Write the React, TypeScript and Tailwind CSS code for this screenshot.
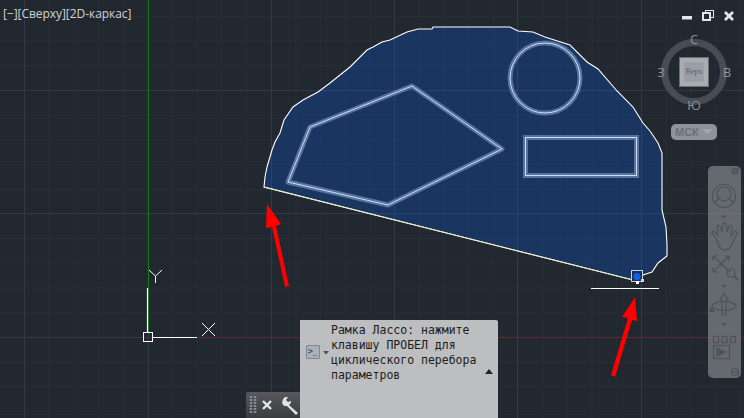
import React from "react";

const minorX = Array.from({ length: 31 }, (_, i) => 24.5 + i * 24.68);
const minorY = Array.from({ length: 17 }, (_, i) => 16.5 + i * 24.68);
const majorX = [24.5, 148.5, 271.5, 394.5, 517.5, 641.5];
const majorY = [90.5, 213.5];

const lasso =
  "M264 187 L265 177 L267 167 L272 150 L275 142 L280 133 L284 120 L293 107 L303 100 L318 92 L330 83 L340 75 L350 67 L355 62 L367 50 L373 47 L382 42 L390 40 L407 32 L418 29 L432 29 L433 27 L510 27 L518 31 L533 32 L545 37 L570 45 L587 62 L598 69 L617 91 L633 107 L643 123 L650 131 L658 143 L662 153 L662 210 L666 227 L667 245 L667 256 L658 263 L652 272 L643 275 L637 281 Z";

const poly = "M310 127 L412 86 L502 149 L388 205 L288 182 Z";

function Shapes() {
  return (
    <>
      <path d={poly} strokeLinejoin="round" />
      <circle cx="545" cy="78" r="35" />
      <rect x="525.5" y="137.5" width="111" height="38" />
    </>
  );
}

function Caret() {
  return (
    <svg width={6} height={4} className="shrink-0">
      <path d="M0 0 H6 L3 3.5 Z" fill="#4d5157" />
    </svg>
  );
}

function CubeLetter({ children }: { children: React.ReactNode }) {
  return <span className="relative text-[13px] leading-none text-[#8f9296]">{children}</span>;
}

function DrawingCanvas() {
  return (
    <svg className="absolute inset-0" width={744} height={418} viewBox="0 0 744 418" fill="none">
      <defs>
        <clipPath id="lc">
          <path d={lasso} />
        </clipPath>
      </defs>
      {minorX.map((x) => (
        <line key={x} x1={x} x2={x} y1={0} y2={418} stroke="#282e37" />
      ))}
      {minorY.map((y) => (
        <line key={y} x1={0} x2={744} y1={y} y2={y} stroke="#282e37" />
      ))}
      {majorX.map((x) => (
        <line key={`a${x}`} x1={x} x2={x} y1={0} y2={418} stroke="#333848" />
      ))}
      {majorY.map((y) => (
        <line key={`b${y}`} x1={0} x2={744} y1={y} y2={y} stroke="#333848" />
      ))}
      <line x1={0} x2={148} y1={337.5} y2={337.5} stroke="#333848" />
      <path d={lasso} fill="#193560" />
      <g clipPath="url(#lc)">
        {minorX.map((x) => (
          <line key={`m${x}`} x1={x} x2={x} y1={0} y2={418} stroke="#1e3a64" />
        ))}
        {minorY.map((y) => (
          <line key={`n${y}`} x1={0} x2={744} y1={y} y2={y} stroke="#1e3a64" />
        ))}
        {majorX.map((x) => (
          <line key={`p${x}`} x1={x} x2={x} y1={0} y2={418} stroke="#28436f" />
        ))}
        {majorY.map((y) => (
          <line key={`q${y}`} x1={0} x2={744} y1={y} y2={y} stroke="#28436f" />
        ))}
      </g>
      <line x1={148} x2={744} y1={337.5} y2={337.5} stroke="#5c2a2f" />
      <line x1={148.5} x2={148.5} y1={0} y2={333} stroke="#157a15" />
      <path d={lasso} stroke="#ffffff" strokeWidth="1.1" />
      <path d="M264 187 L637 281" stroke="#dcefbe" strokeWidth="1" />

      <g stroke="#56739f" strokeWidth="5">
        <Shapes />
      </g>
      <g stroke="#cfe0f5" strokeWidth="1">
        <Shapes />
      </g>

      <path d="M147.5 288 V332 M153 337.5 H197" stroke="#fff" strokeWidth="1.2" />
      <rect x="143.5" y="332.5" width="9" height="9" stroke="#fff" />
      <path d="M149 270 L155.5 276 L162 270 M155.5 276 V283 M202 323 L215 336 M215 323 L202 336" stroke="#fff" />

      <line x1={591} x2={659} y1={288.5} y2={288.5} stroke="#fff" />
      <rect x="631.5" y="270.5" width="11" height="11" fill="#1e2f4f" stroke="#c8d4e0" />
      <circle cx="637" cy="276.5" r="3.6" fill="#0a62f0" />
      <rect x="636" y="281" width="3" height="3" fill="#fff" />
      <rect x="641" y="279" width="3" height="3" fill="#cfd3d8" />

      <path d="M267 204 L281 224 L276 226 L289 286 L285 287 L272 227 L266 228 Z" fill="#ff0000" />
      <path d="M635 297 L637 321 L632 320 L615 377 L611 375 L628 318 L622 317 Z" fill="#ff0000" />
    </svg>
  );
}

function ViewCube() {
  return (
    <div className="relative mt-[8px] mr-[12px] w-[76px] h-[76px] grid grid-cols-[10px_56px_10px] grid-rows-[10px_56px_10px] place-items-center">
      <div className="absolute inset-[5px] rounded-full border-[7px] border-[#484d55]" />
      <span />
      <CubeLetter>С</CubeLetter>
      <span />
      <CubeLetter>З</CubeLetter>
      <div className="relative w-[30px] h-[30px] bg-[#a9acb0] border border-[#6a6e74] flex items-center justify-center">
        <div
          className="w-[20px] h-[20px] bg-[#9b9ea6] flex items-center justify-center text-[8px] text-[#5c5e68]"
          style={{ fontFamily: '"Liberation Serif", serif' }}
        >
          Верх
        </div>
      </div>
      <CubeLetter>В</CubeLetter>
      <span />
      <CubeLetter>Ю</CubeLetter>
      <span />
    </div>
  );
}

function WindowButtons() {
  return (
    <div className="mt-[10px] mr-[10px] flex items-start gap-[10px]">
      <svg width={10} height={10} className="mt-[6px]">
        <rect width={10} height={3.5} fill="#e6e6e6" />
      </svg>
      <svg width={12} height={11} viewBox="0 0 12 11" fill="none">
        <rect x="3.5" y="0.5" width="8" height="7" stroke="#e6e6e6" />
        <rect x="1" y="3" width="7" height="7" fill="#22282f" stroke="#e6e6e6" strokeWidth="2" />
      </svg>
      <svg width={10} height={10} viewBox="0 0 10 10" className="mt-[1px]">
        <path d="M1 1 L9 9 M9 1 L1 9" stroke="#e6e6e6" strokeWidth="2.8" />
      </svg>
    </div>
  );
}

function NavBar() {
  const s = "#4f5359";
  return (
    <div className="mt-[26px] mr-[3px] w-[33px] h-[212px] rounded-[5px] bg-[#777b80]/80">
      <svg width={33} height={212} viewBox="0 0 33 212" fill="none" stroke={s} strokeWidth="1.2">
        <circle cx="27" cy="5" r="3" fill="#585c62" />
        <circle cx="16" cy="30" r="11.5" />
        <circle cx="16" cy="28" r="7" />
        <path d="M6 36 L11 33 M21 33 L26 36" />
        <path d="M13 49.5 H19 L16 52.5 Z" fill={s} stroke="none" />
        <path d="M4 56.5 H29" stroke="#6f6f6a" />
        <path d="M9 74 L4 67 Q4 65 6 65 L10 69 L9 60 Q11 58 12 60 L14 66 L15 57.5 Q17 56 18 58 L19 66 L21 60 Q23 58 24 60 L23 70 L27 65 Q29 65 29 67 L25 76 Q23 84 16 84 Q11 83 9 74 Z" />
        <path d="M5 90 L22 106 M21 90 L5 106 M5 90 V95 M5 90 H10 M21 90 H16 M21 90 V95 M5 106 V101 M5 106 H10" />
        <circle cx="23" cy="107" r="4" />
        <path d="M26 110 L30 114" strokeWidth="2" />
        <path d="M13 119 H19 L16 122 Z" fill={s} stroke="none" />
        <path d="M12 134 L16 127 L20 134 H18 V149 H14 V134 Z" />
        <ellipse cx="16" cy="140" rx="12" ry="4.5" />
        <path d="M3 141 L7 146 L1 146 Z" fill={s} stroke="none" />
        <path d="M13 157 H19 L16 160 Z" fill={s} stroke="none" />
        <rect x="5.5" y="170.5" width="5" height="6" />
        <rect x="14" y="170.5" width="5" height="6" />
        <rect x="22.5" y="170.5" width="5" height="6" />
        <rect x="5.5" y="179.5" width="16" height="13" />
        <path d="M9 182 L17 186 L9 190 Z" fill={s} />
        <circle cx="27" cy="206" r="3.5" />
        <path d="M24 206 H30" />
      </svg>
    </div>
  );
}

function CommandToolbar() {
  return (
    <div className="w-[54px] h-[26px] shrink-0 bg-gradient-to-b from-[#55585c] to-[#3a3c40] rounded-tl-[2px]">
      <svg width={54} height={26} viewBox="0 0 54 26" fill="none">
        <path d="M5 4 V22 M9 4 V22" stroke="#8a8c90" strokeWidth="2.5" strokeDasharray="2 1" />
        <path d="M17 9 L25 17 M25 9 L17 17" stroke="#e6e6e6" strokeWidth="2.4" />
        <path d="M37 7 L39 5 L42 5 L40 8 L42 10 L45 9 L45 11 L43 13 L52 21 L50 23 L41 14 L38 14 L36 11 Z" fill="#e0e0e0" />
      </svg>
    </div>
  );
}

function CommandPrompt() {
  return (
    <div className="w-[198px] h-[98px] flex items-start bg-[#c8cacb]/[0.93] rounded-tr-[2px] pl-[6px] pt-[3px]">
      <div
        className="mt-[22px] w-[14px] h-[14px] shrink-0 bg-[#a8b0ba] border border-[#80878f] rounded-[1px] text-[8px] leading-[12px] text-[#333] pl-[1px]"
        style={{ fontFamily: '"DejaVu Sans Mono", monospace' }}
      >
        &gt;_
      </div>
      <div className="mt-[28px] ml-[3px] mr-[2px]">
        <Caret />
      </div>
      <div
        className="w-[156px] shrink-0 text-[11.5px] leading-[15px] text-[#1c1c1c] whitespace-pre"
        style={{ fontFamily: '"DejaVu Sans Mono", "Liberation Mono", monospace' }}
      >
        {"Рамка Лассо: нажмите\nклавишу ПРОБЕЛ для\nциклического перебора\nпараметров"}
      </div>
      <svg width={8} height={5} className="mt-[46px] -ml-[2px] shrink-0">
        <path d="M0 5 H8 L4 0 Z" fill="#222" />
      </svg>
    </div>
  );
}

export default function App() {
  return (
    <div
      className="relative w-[744px] h-[418px] overflow-hidden bg-[#22282f]"
      style={{ fontFamily: '"Open Sans", "Liberation Sans", sans-serif' }}
    >
      <DrawingCanvas />

      <div className="absolute left-[3px] top-[6px] text-[12px] leading-[16px] tracking-[-0.05px] text-[#cfd3d6] whitespace-nowrap">
        [−][Сверху][2D-каркас]
      </div>

      <div className="absolute right-0 top-0 flex flex-col items-end">
        <WindowButtons />
        <ViewCube />
        <div
          className="mt-[14px] mr-[27px] w-[46px] h-[16px] rounded-[5px] bg-[#8e929c] flex items-center justify-between px-[4px] text-[11px] font-bold text-[#6c707a]"
          style={{ fontFamily: '"Liberation Sans", sans-serif' }}
        >
          <span>МСК</span>
          <svg width={11} height={6}>
            <path d="M0 0 H11 L5.5 5 Z" fill="#a2a6ae" />
          </svg>
        </div>
        <NavBar />
      </div>

      <div className="absolute left-[246px] bottom-0 flex items-end">
        <CommandToolbar />
        <CommandPrompt />
      </div>
    </div>
  );
}
